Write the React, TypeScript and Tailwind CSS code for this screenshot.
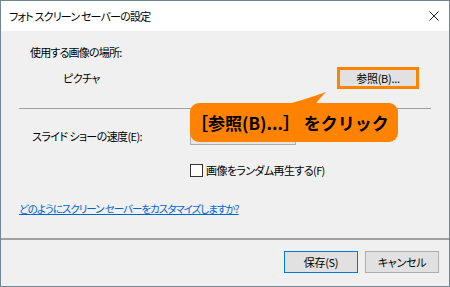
import React from 'react'

const font = "font-['Noto_Sans_CJK_JP',sans-serif] [font-feature-settings:'palt']"

const Button = ({ label, primary }: { label: string; primary?: boolean }) => (
    <div
        className={`flex h-[22px] w-[74px] items-center justify-center border bg-[#e1e1e1] text-[11px] tracking-[-0.3px] ${
            primary ? 'border-[#0078d7]' : 'border-[#adadad]'
        }`}
    >
        {label}
    </div>
)

const App = () => {
    return (
        <div
            className={`relative flex h-[287px] w-[450px] flex-col overflow-hidden border border-[#6f8794] bg-[#f0f0f0] text-black ${font}`}
        >
            {/* title bar */}
            <div className="flex h-[30px] shrink-0 items-center justify-between bg-white pl-[8px] pr-[10px]">
                <span className="text-[11px] tracking-[-0.8px]">フォト スクリーン セーバーの設定</span>
                <svg width="10" height="10" viewBox="0 0 10 10">
                    <path d="M0.5 0.5 L9.5 9.5 M9.5 0.5 L0.5 9.5" stroke="#222" strokeWidth="1" />
                </svg>
            </div>

            {/* body */}
            <div className="flex flex-1 flex-col">
                <div className="ml-[29px] mt-[13px] h-[16px] text-[11px] leading-[16px] tracking-[-0.8px]">使用する画像の場所:</div>

                <div className="mt-[7px] flex h-[22px] items-center">
                    <span className="ml-[62px] text-[11px] tracking-[-0.5px]">ピクチャ</span>
                    <div className="ml-auto mr-[30px] flex h-[22px] w-[82px] items-center justify-center border-[3px] border-[#ff8200]">
                        <div className="flex h-[16px] w-[76px] items-center justify-center bg-[#e1e1e1] text-[11px] tracking-[-0.3px]">
                            参照(B)...
                        </div>
                    </div>
                </div>

                <div className="ml-[18px] mr-[18px] mt-[19px] h-[1px] bg-[#9f9f9f]" />

                <div className="mt-[15px] flex h-[21px] items-center">
                    <span className="ml-[31px] w-[158px] pt-[4px] text-[11px] tracking-[-0.6px]">スライド ショーの速度(E):</span>
                    <div className="h-[21px] w-[106px] border border-[#adadad] bg-[#e5e5e5]" />
                </div>

                <div className="ml-[189px] mt-[18px] flex h-[15px] items-center gap-[3px]">
                    <div className="h-[13px] w-[13px] border border-[#333] bg-white" />
                    <span className="text-[11px] tracking-[-0.6px]">画像をランダム再生する(F)</span>
                </div>

                <div className="ml-[18px] mt-[23px] h-[16px] text-[10.5px] leading-[16px] tracking-[-1px] text-[#0066cc] underline">
                    どのようにスクリーン セーバーをカスタマイズしますか?
                </div>

                <div className="mt-[21px] h-[2px] bg-[#a0a0a0]" />

                <div className="mt-[11px] flex justify-end gap-[7px] pr-[10px]">
                    <Button label="保存(S)" primary />
                    <Button label="キャンセル" />
                </div>
            </div>

            {/* callout */}
            <svg className="absolute left-[270px] top-[90px]" width="60" height="16" viewBox="0 0 60 16">
                <path d="M9 15 Q30 10 55 1 Q48 8 43 15 Z" fill="#ff8200" />
            </svg>
            <div className="absolute left-[189px] top-[102px] flex h-[39px] w-[208px] items-center rounded-[9px] bg-[#ff8200] pl-[1px]">
                <span className="text-[17px] font-bold [font-feature-settings:normal]">［参照(B)...］ をクリック</span>
            </div>
        </div>
    )
}

export default App
